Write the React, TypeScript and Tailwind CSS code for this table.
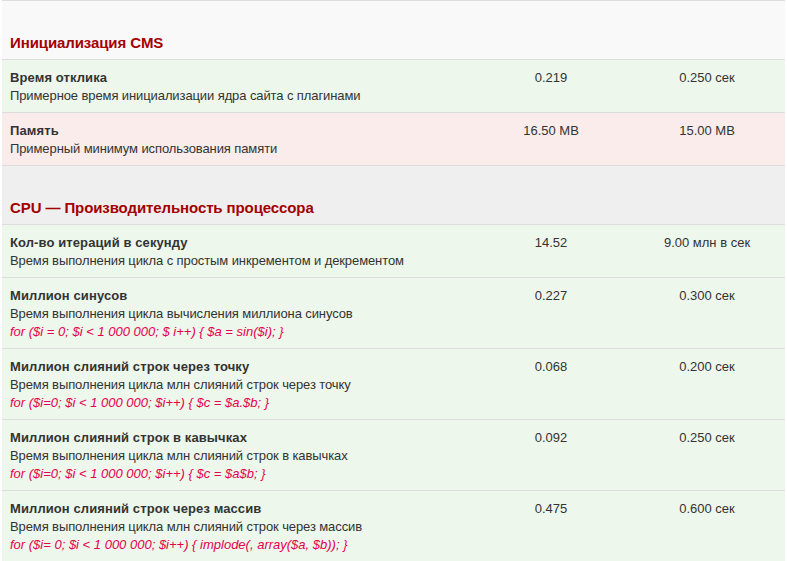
import React from 'react';

type Row = {
  title: string;
  desc: string;
  code?: string;
  value: string;
  norm: string;
  bad?: boolean;
};

type Section = {
  title: string;
  bg: string;
  rows: Row[];
};

const sections: Section[] = [
  {
    title: 'Инициализация CMS',
    bg: 'bg-[#f9f9f9]',
    rows: [
      {
        title: 'Время отклика',
        desc: 'Примерное время инициализации ядра сайта с плагинами',
        value: '0.219',
        norm: '0.250 сек',
      },
      {
        title: 'Память',
        desc: 'Примерный минимум использования памяти',
        value: '16.50 MB',
        norm: '15.00 MB',
        bad: true,
      },
    ],
  },
  {
    title: 'CPU — Производительность процессора',
    bg: 'bg-[#efefef]',
    rows: [
      {
        title: 'Кол-во итераций в секунду',
        desc: 'Время выполнения цикла с простым инкрементом и декрементом',
        value: '14.52',
        norm: '9.00 млн в сек',
      },
      {
        title: 'Миллион синусов',
        desc: 'Время выполнения цикла вычисления миллиона синусов',
        code: 'for ($i = 0; $i < 1 000 000; $ i++) { $a = sin($i); }',
        value: '0.227',
        norm: '0.300 сек',
      },
      {
        title: 'Миллион слияний строк через точку',
        desc: 'Время выполнения цикла млн слияний строк через точку',
        code: 'for ($i=0; $i < 1 000 000; $i++) { $c = $a.$b; }',
        value: '0.068',
        norm: '0.200 сек',
      },
      {
        title: 'Миллион слияний строк в кавычках',
        desc: 'Время выполнения цикла млн слияний строк в кавычках',
        code: 'for ($i=0; $i < 1 000 000; $i++) { $c = $a$b; }',
        value: '0.092',
        norm: '0.250 сек',
      },
      {
        title: 'Миллион слияний строк через массив',
        desc: 'Время выполнения цикла млн слияний строк через массив',
        code: 'for ($i= 0; $i < 1 000 000; $i++) { implode(, array($a, $b)); }',
        value: '0.475',
        norm: '0.600 сек',
      },
    ],
  },
];

const App: React.FC = () => {
  return (
    <div className="min-h-[561px] bg-white px-[2px] font-['Liberation_Sans',Arial,sans-serif] text-[13px] leading-[18px] text-[#333333]">
      <div className="border-t border-[#dddddd]">
        {sections.map((section) => (
          <div key={section.title}>
            <div className={`${section.bg} border-b border-[#dddddd] px-2 pt-[33px] pb-[7px]`}>
              <h2 className="text-[15px] font-bold leading-[18px] tracking-[-0.1px] text-[#a30000]">
                {section.title}
              </h2>
            </div>
            {section.rows.map((row) => (
              <div
                key={row.title}
                className={`grid grid-cols-[471px_156px_156px] border-b border-[#dddddd] pt-[9px] pb-[7px] ${
                  row.bad ? 'bg-[#f9ecea]' : 'bg-[#edf7eb]'
                }`}
              >
                <div className="px-2">
                  <div className="font-bold tracking-[0.1px]">{row.title}</div>
                  <div className="tracking-[-0.1px]">{row.desc}</div>
                  {row.code && <div className="italic text-[#e6004e]">{row.code}</div>}
                </div>
                <div className="text-center">{row.value}</div>
                <div className="text-center">{row.norm}</div>
              </div>
            ))}
          </div>
        ))}
      </div>
    </div>
  );
};

export default App;
